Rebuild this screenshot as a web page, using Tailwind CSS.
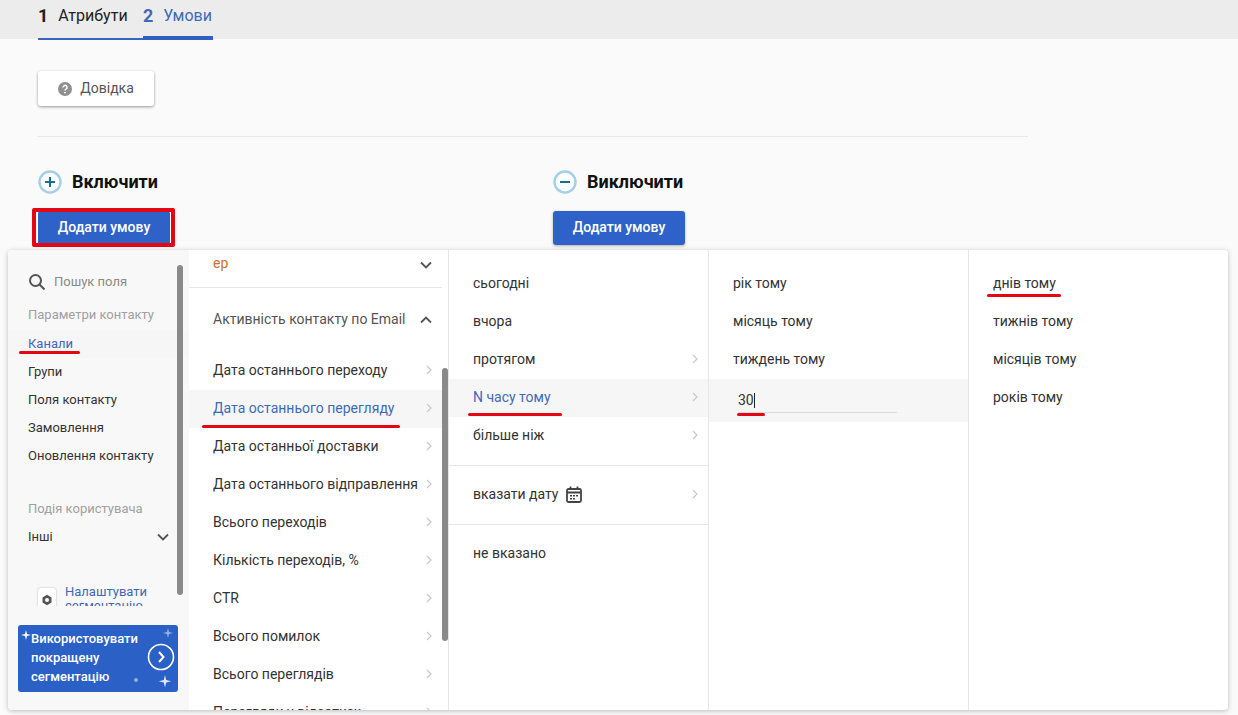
<!DOCTYPE html>
<html lang="en">
  <head>
    <meta charset="UTF-8" />
    <meta name="viewport" content="width=device-width, initial-scale=1.0" />
    <title>Умови</title>
    <script src="https://cdn.jsdelivr.net/npm/@tailwindcss/browser@4"></script>
  </head>
  <body class="relative h-[715px] w-[1238px] overflow-hidden bg-[#fafafa] font-['Roboto',sans-serif] text-[#333]">
    <!-- tabs -->
    <header class="h-[39px] bg-[#ececec] pl-[38px]">
      <div class="flex h-[40px] w-[175px] border-b-[2px] border-[#3565c0]">
        <div class="flex w-[105px] items-center pb-[6px]">
          <span class="-mt-[2px] text-[18px] font-bold text-[#222]">1</span>
          <span class="ml-[10px] text-[16px] text-[#222]">Атрибути</span>
        </div>
        <div class="-mb-[2px] flex w-[70px] items-center border-b-[4px] border-[#2f62c0] pb-[4px]">
          <span class="-mt-[2px] text-[18px] font-bold text-[#3f69b8]">2</span>
          <span class="ml-[10px] text-[16px] text-[#3f69b8]">Умови</span>
        </div>
      </div>
    </header>

    <main class="pl-[38px]">
      <!-- help button -->
      <button class="mt-[32px] flex h-[35px] w-[116px] items-center justify-center gap-[8px] rounded-[3px] bg-white text-[14px] text-[#555] shadow-[0_1px_3px_rgba(0,0,0,0.4)]">
        <svg width="14" height="14" viewBox="0 0 14 14">
          <circle cx="7" cy="7" r="7" fill="#8f8f8f" />
          <path d="M5 5.4a2 2 0 1 1 3 1.7c-.7.4-1 .7-1 1.4" fill="none" stroke="#fff" stroke-width="1.5" />
          <circle cx="7" cy="10.6" r="0.9" fill="#fff" />
        </svg>
        Довідка
      </button>

      <div class="mt-[30px] h-px w-[990px] bg-[#e8e8e8]"></div>

      <div class="mt-[33px] flex">
        <!-- include -->
        <section class="w-[515px]">
          <div class="flex h-[24px] items-center gap-[10px]">
            <svg width="24" height="24" viewBox="0 0 24 24">
              <circle cx="12" cy="12" r="10.5" fill="#fff" stroke="#a3d0e8" stroke-width="2.4" />
              <path d="M7 12h10M12 7v10" stroke="#14708c" stroke-width="2" />
            </svg>
            <h2 class="text-[18px] font-bold leading-[24px] text-[#111]">Включити</h2>
          </div>
          <button class="mt-[17px] h-[34px] w-[132px] rounded-[3px] bg-[#2f62c8] pb-[1px] text-[14px] font-medium text-white">Додати умову</button>
        </section>
        <!-- exclude -->
        <section>
          <div class="flex h-[24px] items-center gap-[10px]">
            <svg width="24" height="24" viewBox="0 0 24 24">
              <circle cx="12" cy="12" r="10.5" fill="#fff" stroke="#a3d0e8" stroke-width="2.4" />
              <path d="M7 12h10" stroke="#14708c" stroke-width="2" />
            </svg>
            <h2 class="text-[18px] font-bold leading-[24px] text-[#111]">Виключити</h2>
          </div>
          <button class="mt-[17px] h-[34px] w-[132px] rounded-[3px] bg-[#2f62c8] pb-[1px] text-[14px] font-medium text-white shadow-[0_1px_3px_rgba(0,0,0,0.3)]">Додати умову</button>
        </section>
      </div>
    </main>

    <!-- red frame round the first button -->
    <div class="absolute left-[32px] top-[208px] h-[39px] w-[143px] rounded-[2px] border-[4px] border-[#e30613]"></div>

    <!-- dropdown -->
    <div class="absolute left-[8px] top-[250px] flex h-[460px] w-[1220px] overflow-hidden rounded-[4px] bg-white text-[14px] shadow-[0_1px_5px_rgba(0,0,0,0.25)]">
      <!-- fields -->
      <aside class="relative h-full w-[181px] shrink-0 bg-[#f8f8f8] text-[13px]">
        <div class="flex h-[64px] items-center pl-[20px]">
          <svg width="18" height="18" viewBox="0 0 18 18" fill="none" stroke="#555" stroke-width="2">
            <circle cx="7.5" cy="7.5" r="5.5" />
            <path d="M11.5 11.5l5 5" />
          </svg>
          <span class="ml-[8px] text-[#8a8a8a]">Пошук поля</span>
        </div>
        <div class="-mt-[14px] flex h-[30px] items-center pb-[1px] pl-[20px] text-[#a0a0a0]">Параметри контакту</div>
        <div class="flex h-[28px] items-center bg-[#f6f6f6] pl-[20px] text-[#3f69b8]">Канали</div>
        <div class="flex h-[28px] items-center pl-[20px]">Групи</div>
        <div class="flex h-[28px] items-center pl-[20px]">Поля контакту</div>
        <div class="flex h-[28px] items-center pl-[20px]">Замовлення</div>
        <div class="flex h-[28px] items-center pl-[20px]">Оновлення контакту</div>
        <div class="mt-[25px] flex h-[28px] items-center pl-[20px] text-[#a0a0a0]">Подія користувача</div>
        <div class="flex h-[28px] items-center justify-between pl-[20px] pr-[19px]">
          Інші
          <svg width="14" height="9" viewBox="0 0 14 9" fill="none" stroke="#555" stroke-width="1.8"><path d="M2 1.5l5 5 5-5" /></svg>
        </div>
        <!-- settings link, clipped -->
        <div class="mt-[34px] flex h-[21px] overflow-hidden pl-[30px]">
          <div class="mt-[3px] flex h-[24px] w-[18px] items-center justify-center rounded-[3px] bg-white shadow-[0_0_2px_rgba(0,0,0,0.3)]">
            <svg width="12" height="12" viewBox="0 0 12 12">
              <path d="M6 .8l4.5 2.6v5.2L6 11.2 1.5 8.6V3.4z" fill="#555" />
              <circle cx="6" cy="6" r="2" fill="#fff" />
            </svg>
          </div>
          <div class="ml-[9px] text-[13px] leading-[14px] text-[#3f69b8]">Налаштувати<br />сегментацію</div>
        </div>
        <!-- banner -->
        <div class="absolute left-[10px] top-[375px] flex h-[67px] w-[160px] items-center rounded-[3px] bg-[#2b60c6] pb-[2px] pl-[13px] text-[13px] font-medium leading-[19px] text-white">
          <span>Використовувати<br />покращену<br />сегментацію</span>
          <svg class="absolute left-0 top-0" width="160" height="67" viewBox="0 0 160 67" fill="#fff">
            <path d="M8 5l1 4 4 1-4 1-1 4-1-4-4-1 4-1z" />
            <path d="M150 3l1 4 4 1-4 1-1 4-1-4-4-1 4-1z" opacity=".5" />
            <path d="M147 50l1.2 5 5 1.2-5 1.2-1.2 5-1.2-5-5-1.2 5-1.2z" opacity=".85" />
            <circle cx="118" cy="55" r="2" opacity=".5" />
            <circle cx="143" cy="32" r="12.5" fill="none" stroke="#fff" stroke-width="1.6" />
            <path d="M141 27l4.5 5-4.5 5" fill="none" stroke="#fff" stroke-width="2" />
          </svg>
        </div>
        <div class="absolute left-[169px] top-[15px] h-[330px] w-[6px] rounded-[3px] bg-[#8a8a8a]"></div>
      </aside>

      <!-- second column -->
      <section class="relative h-full w-[260px] shrink-0 overflow-hidden border-r border-[#e6e6e6]">
        <div class="flex h-[37px] items-start justify-between pl-[24px] pr-[15px] pt-[3px] text-[#c9702e]">
          ер
          <svg class="mt-[8px]" width="14" height="9" viewBox="0 0 14 9" fill="none" stroke="#555" stroke-width="1.8"><path d="M2 1.5l5 5 5-5" /></svg>
        </div>
        <div class="ml-[0px] mr-[6px] h-px bg-[#e6e6e6]"></div>
        <div class="flex h-[64px] items-center justify-between pb-[1px] pl-[24px] pr-[15px] text-[#555]">
          Активність контакту по Email
          <svg width="14" height="9" viewBox="0 0 14 9" fill="none" stroke="#555" stroke-width="1.8"><path d="M2 7.5l5-5 5 5" /></svg>
        </div>
        <div class="flex h-[38px] items-center justify-between pb-[2px] pl-[24px] pr-[16px]">Дата останнього переходу<svg width="6" height="10" viewBox="0 0 6 10" fill="none" stroke="#c8c8c8" stroke-width="1.2"><path d="M1 1l4 4-4 4" /></svg></div>
        <div class="flex h-[38px] items-center justify-between bg-[#f6f6f6] pb-[2px] pl-[24px] pr-[16px] text-[#3f69b8]">Дата останнього перегляду<svg width="6" height="10" viewBox="0 0 6 10" fill="none" stroke="#c8c8c8" stroke-width="1.2"><path d="M1 1l4 4-4 4" /></svg></div>
        <div class="flex h-[38px] items-center justify-between pb-[2px] pl-[24px] pr-[16px]">Дата останньої доставки<svg width="6" height="10" viewBox="0 0 6 10" fill="none" stroke="#c8c8c8" stroke-width="1.2"><path d="M1 1l4 4-4 4" /></svg></div>
        <div class="flex h-[38px] items-center justify-between pb-[2px] pl-[24px] pr-[16px]">Дата останнього відправлення<svg width="6" height="10" viewBox="0 0 6 10" fill="none" stroke="#c8c8c8" stroke-width="1.2"><path d="M1 1l4 4-4 4" /></svg></div>
        <div class="flex h-[38px] items-center justify-between pb-[2px] pl-[24px] pr-[16px]">Всього переходів<svg width="6" height="10" viewBox="0 0 6 10" fill="none" stroke="#c8c8c8" stroke-width="1.2"><path d="M1 1l4 4-4 4" /></svg></div>
        <div class="flex h-[38px] items-center justify-between pb-[2px] pl-[24px] pr-[16px]">Кількість переходів, %<svg width="6" height="10" viewBox="0 0 6 10" fill="none" stroke="#c8c8c8" stroke-width="1.2"><path d="M1 1l4 4-4 4" /></svg></div>
        <div class="flex h-[38px] items-center justify-between pb-[2px] pl-[24px] pr-[16px]">CTR<svg width="6" height="10" viewBox="0 0 6 10" fill="none" stroke="#c8c8c8" stroke-width="1.2"><path d="M1 1l4 4-4 4" /></svg></div>
        <div class="flex h-[38px] items-center justify-between pb-[2px] pl-[24px] pr-[16px]">Всього помилок<svg width="6" height="10" viewBox="0 0 6 10" fill="none" stroke="#c8c8c8" stroke-width="1.2"><path d="M1 1l4 4-4 4" /></svg></div>
        <div class="flex h-[38px] items-center justify-between pb-[2px] pl-[24px] pr-[16px]">Всього переглядів<svg width="6" height="10" viewBox="0 0 6 10" fill="none" stroke="#c8c8c8" stroke-width="1.2"><path d="M1 1l4 4-4 4" /></svg></div>
        <div class="flex h-[38px] items-center justify-between pb-[2px] pl-[24px] pr-[16px]">Перегляди у відсотках<svg width="6" height="10" viewBox="0 0 6 10" fill="none" stroke="#c8c8c8" stroke-width="1.2"><path d="M1 1l4 4-4 4" /></svg></div>
        <div class="absolute right-0 top-[118px] h-[273px] w-[6px] rounded-[3px] bg-[#8a8a8a]"></div>
      </section>

      <!-- third column -->
      <section class="h-full w-[260px] shrink-0 border-r border-[#e6e6e6] pt-[15px]">
        <div class="flex h-[38px] items-center pb-[2px] pl-[24px]">сьогодні</div>
        <div class="flex h-[38px] items-center pb-[2px] pl-[24px]">вчора</div>
        <div class="flex h-[38px] items-center justify-between pb-[2px] pl-[24px] pr-[10px]">протягом<svg width="6" height="10" viewBox="0 0 6 10" fill="none" stroke="#c8c8c8" stroke-width="1.2"><path d="M1 1l4 4-4 4" /></svg></div>
        <div class="flex h-[38px] items-center justify-between bg-[#f6f6f6] pb-[2px] pl-[24px] pr-[10px] text-[#3f69b8]">N часу тому<svg width="6" height="10" viewBox="0 0 6 10" fill="none" stroke="#c8c8c8" stroke-width="1.2"><path d="M1 1l4 4-4 4" /></svg></div>
        <div class="flex h-[38px] items-center justify-between pb-[2px] pl-[24px] pr-[10px]">більше ніж<svg width="6" height="10" viewBox="0 0 6 10" fill="none" stroke="#c8c8c8" stroke-width="1.2"><path d="M1 1l4 4-4 4" /></svg></div>
        <div class="mt-[10px] h-px bg-[#e6e6e6]"></div>
        <div class="flex h-[58px] items-center justify-between pb-[2px] pl-[24px] pr-[10px]">
          <span class="flex items-center gap-[8px]">вказати дату
            <svg width="16" height="17" viewBox="0 0 16 17" fill="none" stroke="#444" stroke-width="1.8">
              <rect x="1" y="3" width="14" height="13" rx="1.5" />
              <path d="M1 6.5h14M4.5 0.5v3M11.5 0.5v3" />
              <path d="M4 9.7h2M7 9.7h2M10 9.7h2M4 12.7h2M7 12.7h2" stroke-width="1.5" />
            </svg>
          </span>
          <svg width="6" height="10" viewBox="0 0 6 10" fill="none" stroke="#c8c8c8" stroke-width="1.2"><path d="M1 1l4 4-4 4" /></svg>
        </div>
        <div class="h-px bg-[#e6e6e6]"></div>
        <div class="flex h-[58px] items-center pb-[2px] pl-[24px]">не вказано</div>
      </section>

      <!-- fourth column -->
      <section class="h-full w-[260px] shrink-0 border-r border-[#e6e6e6] pt-[15px]">
        <div class="flex h-[38px] items-center pb-[2px] pl-[24px]">рік тому</div>
        <div class="flex h-[38px] items-center pb-[2px] pl-[24px]">місяць тому</div>
        <div class="flex h-[38px] items-center pb-[2px] pl-[24px]">тиждень тому</div>
        <div class="h-[43px] bg-[#f6f6f6] pl-[29px] pt-[9px]">
          <div class="flex h-[25px] w-[159px] items-center border-b border-[#dcdcdc]">30<span class="h-[15px] w-px bg-[#222]"></span></div>
        </div>
      </section>

      <!-- fifth column -->
      <section class="h-full flex-1 pt-[15px]">
        <div class="flex h-[38px] items-center pb-[2px] pl-[24px]">днів тому</div>
        <div class="flex h-[38px] items-center pb-[2px] pl-[24px]">тижнів тому</div>
        <div class="flex h-[38px] items-center pb-[2px] pl-[24px]">місяців тому</div>
        <div class="flex h-[38px] items-center pb-[2px] pl-[24px]">років тому</div>
      </section>
    </div>

    <!-- red underlines drawn over the screenshot -->
    <div class="absolute left-[19px] top-[351px] h-[3px] w-[61px] rounded-full bg-[#e30613]"></div>
    <div class="absolute left-[202px] top-[425px] h-[3px] w-[198px] rounded-full bg-[#e30613]"></div>
    <div class="absolute left-[468px] top-[413px] h-[3px] w-[94px] rounded-full bg-[#e30613]"></div>
    <div class="absolute left-[737px] top-[413px] h-[3px] w-[28px] rounded-full bg-[#e30613]"></div>
    <div class="absolute left-[987px] top-[294px] h-[3px] w-[74px] rounded-full bg-[#e30613]"></div>
  </body>
</html>
